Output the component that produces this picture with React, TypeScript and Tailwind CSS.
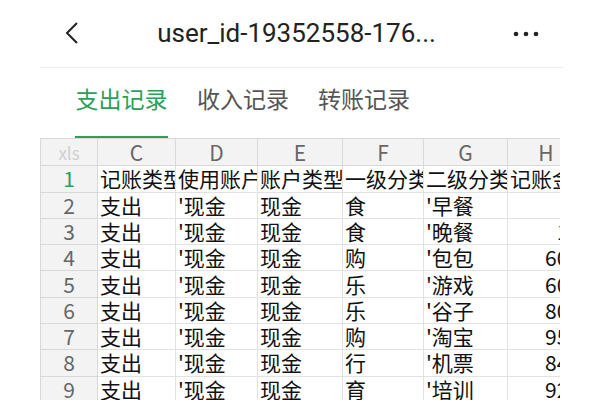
const cols = ['C', 'D', 'E', 'F', 'G', 'H'];
const widths = ['w-[78px]', 'w-[82px]', 'w-[85px]', 'w-[81px]', 'w-[84px]', 'w-[77px]'];

const head = ['记账类型', '使用账户', '账户类型', '一级分类', '二级分类', '记账金额'];

const rows = [
  ['支出', "'现金", '现金', '食', "'早餐", '8'],
  ['支出', "'现金", '现金', '食', "'晚餐", '15'],
  ['支出', "'现金", '现金', '购', "'包包", '600'],
  ['支出', "'现金", '现金', '乐', "'游戏", '600'],
  ['支出', "'现金", '现金', '乐', "'谷子", '800'],
  ['支出', "'现金", '现金', '购', "'淘宝", '950'],
  ['支出', "'现金", '现金', '行', "'机票", '840'],
  ['支出', "'现金", '现金', '育', "'培训", '920'],
];

const cjk = { fontFamily: '"Noto Sans CJK SC", "Noto Sans", sans-serif' };

export default function App() {
  return (
    <div className="w-[600px] h-[400px] bg-white overflow-hidden" style={cjk}>
      {/* Top bar */}
      <div className="h-[67px] flex items-center px-[60px]">
        <svg width="20" height="24" viewBox="0 0 20 24" className="ml-[3px] mb-[2px]">
          <path d="M14 2 L4 12 L14 22" fill="none" stroke="#222" strokeWidth="2" />
        </svg>
        <div
          className="flex-1 text-center text-[26px] text-[#222] pr-[2px] mb-[1px]"
          style={{ fontFamily: 'Roboto, "Noto Sans", sans-serif' }}
        >
          user_id-19352558-176...
        </div>
        <svg width="28" height="8" viewBox="0 0 28 8">
          <circle cx="4" cy="4" r="2.3" fill="#222" />
          <circle cx="14" cy="4" r="2.3" fill="#222" />
          <circle cx="24" cy="4" r="2.3" fill="#222" />
        </svg>
      </div>

      <div className="ml-[40px] mr-[37px] border-t border-[#eeeeee]" />

      {/* Tabs */}
      <div className="h-[70px] flex items-end pl-[75px] gap-[29px]">
        <div className="flex flex-col items-center">
          <span className="text-[23px] text-[#2aa05a] leading-none mb-[26px]">支出记录</span>
          <div className="h-[2px] w-[93px] bg-[#2aa05a]" />
        </div>
        <span className="text-[23px] text-[#555] leading-none mb-[28px]">收入记录</span>
        <span className="text-[23px] text-[#555] leading-none mb-[28px]">转账记录</span>
      </div>

      {/* Sheet */}
      <div className="ml-[40px] w-[520px] overflow-hidden leading-none">
        <div className="w-max border-t border-l border-[#d8d8d8]">
          <div className="flex h-[27px] bg-[#f3f3f3]">
            <div className="w-[57px] shrink-0 flex items-center justify-center border-r border-b border-[#d8d8d8] text-[17px] text-[#d0d0d0]">
              xls
            </div>
            {cols.map((c, i) => (
              <div
                key={c}
                className={`${widths[i]} shrink-0 flex items-center justify-center border-r border-b border-[#d8d8d8] text-[21px] text-[#666]`}
              >
                {c}
              </div>
            ))}
          </div>
          <div className="flex h-[26.5px]">
            <div className="w-[57px] shrink-0 flex items-center justify-center bg-[#f3f3f3] border-r border-b border-[#d8d8d8] text-[21px] text-[#2aa05a]">
              1
            </div>
            {head.map((h, i) => (
              <div
                key={h}
                className={`${widths[i]} shrink-0 flex items-center overflow-hidden whitespace-nowrap pl-[2px] border-r border-b border-[#e2e2e2] text-[21px] text-[#111]`}
              >
                {h}
              </div>
            ))}
          </div>
          {rows.map((r, ri) => (
            <div key={ri} className="flex h-[26.3px]">
              <div className="w-[57px] shrink-0 flex items-center justify-center bg-[#f3f3f3] border-r border-b border-[#d8d8d8] text-[21px] text-[#666]">
                {ri + 2}
              </div>
              {r.map((v, i) => (
                <div
                  key={i}
                  className={`${widths[i]} shrink-0 flex items-center overflow-hidden whitespace-nowrap border-r border-b border-[#e2e2e2] text-[21px] text-[#111] ${
                    i === 5 ? 'justify-end pr-[4px]' : 'pl-[2px]'
                  }`}
                >
                  {v}
                </div>
              ))}
            </div>
          ))}
        </div>
      </div>
    </div>
  );
}
